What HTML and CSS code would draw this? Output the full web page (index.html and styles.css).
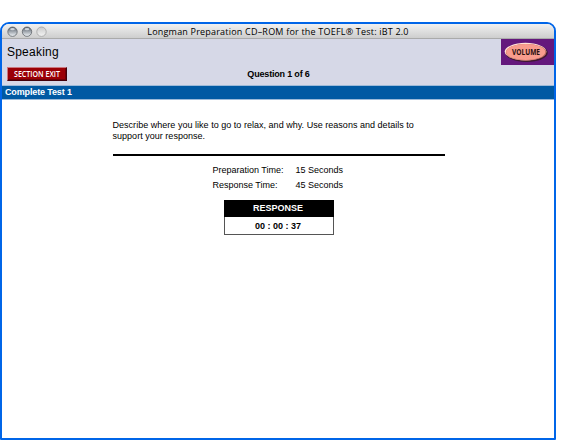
FILE: index.html
```
<!DOCTYPE html>
<html lang="en">
<head>
<meta charset="utf-8">
<title>Longman Preparation CD-ROM</title>
<link rel="stylesheet" href="styles.css">
</head>
<body>
<main class="window">
  <header class="titlebar">
    <svg class="lights" width="42" height="13" viewBox="0 0 42 13">
      <defs>
        <linearGradient id="bead" x1="0" y1="0" x2="0" y2="1">
          <stop offset="0" stop-color="#555c64"/><stop offset=".4" stop-color="#9299a1"/><stop offset="1" stop-color="#f4f8fb"/>
        </linearGradient>
        <linearGradient id="pale" x1="0" y1="0" x2="0" y2="1">
          <stop offset="0" stop-color="#cacaca"/><stop offset="1" stop-color="#f4f4f4"/>
        </linearGradient>
      </defs>
      <circle cx="6.5" cy="6.7" r="4.7" fill="url(#bead)" stroke="#60656b" stroke-width=".8"/>
      <ellipse cx="6.5" cy="4.2" rx="2.3" ry="1.1" fill="#eef2f6" opacity=".75"/>
      <circle cx="21" cy="6.7" r="4.7" fill="url(#bead)" stroke="#60656b" stroke-width=".8"/>
      <ellipse cx="21" cy="4.2" rx="2.3" ry="1.1" fill="#eef2f6" opacity=".75"/>
      <circle cx="35.5" cy="6.7" r="4.7" fill="url(#pale)" stroke="#a2a2a2" stroke-width=".8"/>
    </svg>
    <h1 class="title">Longman Preparation CD–ROM for the TOEFL® Test: iBT 2.0</h1>
  </header>
  <section class="toolbar">
    <div class="left">
      <h2 class="skill">Speaking</h2>
      <button class="exit"><svg width="58" height="12"><text class="label exit-label" x="6" y="8.8" textLength="46" lengthAdjust="spacingAndGlyphs">SECTION EXIT</text></svg></button>
    </div>
    <p class="question">Question 1 of 6</p>
    <button class="volume">
      <svg width="53" height="26" viewBox="0 0 53 26">
        <ellipse cx="25.6" cy="13.8" rx="21.2" ry="9.2" fill="#3f1830"/>
        <ellipse cx="24.5" cy="12.6" rx="20.8" ry="8.8" fill="#ffe1d6"/>
        <ellipse cx="25.1" cy="13.3" rx="20.2" ry="8.4" fill="#b9685e"/>
        <ellipse cx="24.7" cy="13" rx="19.6" ry="8.1" fill="#f89c8d"/>
        <text class="label volume-label" x="11" y="16.2" textLength="28" lengthAdjust="spacingAndGlyphs">VOLUME</text>
      </svg>
    </button>
  </section>
  <div class="banner">Complete Test 1</div>
  <section class="content">
    <p class="prompt">Describe where you like to go to relax, and why. Use reasons and details to<br>support your response.</p>
    <dl class="times">
      <dt>Preparation Time:</dt><dd>15 Seconds</dd>
      <dt>Response Time:</dt><dd>45 Seconds</dd>
    </dl>
    <div class="timer">
      <div class="timer-head">RESPONSE</div>
      <div class="timer-value">00 : 00 : 37</div>
    </div>
  </section>
</main>
</body>
</html>
```
FILE: styles.css
```
* { box-sizing: border-box; }
body {
  margin: 0;
  padding-top: 22px;
  height: 440px;
  background: #fff;
  color: #000;
  font-family: "Liberation Sans", Arial, sans-serif;
  overflow: hidden;
}
h1, h2, p, dl, dd { margin: 0; font-weight: normal; }
button { padding: 0; border: 0; display: block; }
svg { display: block; overflow: visible; }
.window {
  width: 556px;
  height: 418px;
  border: 2px solid #0065e8;
  border-radius: 9px 9px 1px 1px;
  overflow: hidden;
  background: #fff;
}
.titlebar {
  height: 15px;
  display: grid;
  grid-template-columns: 42px 1fr 42px;
  padding: 0 5px 0 4px;
  background: linear-gradient(#f1f1f1, #cecece);
  border-bottom: 1px solid #aaa;
}
.lights { margin-top: 1px; }
.title {
  font: 9px/15px "Open Sans", "Noto Sans", sans-serif;
  letter-spacing: .2px;
  padding-left: 1px;
  text-align: center;
  white-space: nowrap;
}
.toolbar {
  height: 46px;
  display: grid;
  grid-template-columns: 1fr 64px 1fr;
  background: #d6d8e7;
}
.left { padding: 4px 0 0 5px; }
.skill { font-size: 12px; line-height: 18px; letter-spacing: .22px; }
.exit {
  width: 60px;
  height: 14px;
  margin-top: 6px;
  background: #9b0006;
  border: 1px solid;
  border-color: #cb7880 #43000a #43000a #cb7880;
  box-shadow: inset -1px -1px #700006;
}
.label { font-family: "Open Sans", sans-serif; font-weight: 600; }
.exit-label { font-size: 8px; fill: #fff; }
.volume-label { font-size: 8.8px; font-weight: 700; fill: #27100f; }
.question {
  align-self: end;
  font-size: 9px;
  line-height: 12px;
  font-weight: bold;
  letter-spacing: -.18px;
  padding: 0 0 5px 1px;
  text-align: center;
  white-space: nowrap;
}
.volume {
  justify-self: end;
  width: 53px;
  height: 26px;
  background: #64187c;
}
.banner {
  height: 15px;
  border: solid #9cbad9;
  border-width: 1px 0;
  background: #0059a3;
  color: #fff;
  font-size: 9px;
  line-height: 13px;
  font-weight: bold;
  letter-spacing: -.14px;
  padding-left: 3px;
}
.content {
  width: 332px;
  margin-left: 110.5px;
  padding-top: 20px;
  font-size: 9px;
}
.prompt {
  height: 36px;
  line-height: 11px;
  letter-spacing: .025px;
  white-space: nowrap;
  border-bottom: 2px solid #000;
}
.times {
  display: grid;
  grid-template-columns: 83px auto;
  padding: 7px 0 0 100px;
  line-height: 15px;
}
.timer {
  width: 110px;
  margin: 7px 0 0 111.5px;
  border: 1px solid #555;
  text-align: center;
  font-weight: bold;
}
.timer-head {
  height: 17px;
  margin: -1px -1px 0;
  padding-right: 2px;
  background: #000;
  color: #fff;
  line-height: 17px;
}
.timer-value { height: 17px; padding-right: 2px; line-height: 19px; }
```
